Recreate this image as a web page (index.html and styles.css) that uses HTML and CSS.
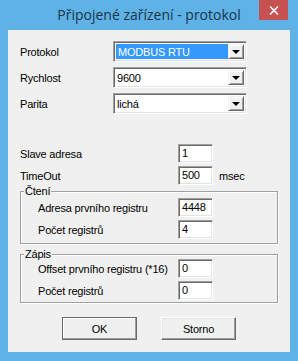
FILE: index.html
```html
<!DOCTYPE html>
<html lang="cs">
<head>
    <meta charset="UTF-8">
    <title>Připojené zařízení - protokol</title>
    <link rel="stylesheet" href="styles.css">
</head>
<body>
    <div class="window">
        <div class="titlebar">
            <span></span>
            <span class="title">Připojené zařízení - protokol</span>
            <span class="close">
                <svg width="10" height="9" viewBox="0 0 10 9">
                    <path d="M1 0.5 L9 8.5 M9 0.5 L1 8.5" stroke="#fff" stroke-width="1.6" fill="none"/>
                </svg>
            </span>
        </div>

        <div class="client">
            <div class="combos">
                <div class="row">
                    <span class="lbl lbl-combo">Protokol</span>
                    <div class="combo">
                        <span class="combo-text"><span class="sel">MODBUS RTU</span></span>
                        <span class="combo-btn"><span class="arrow"></span></span>
                    </div>
                </div>
                <div class="row">
                    <span class="lbl lbl-combo">Rychlost</span>
                    <div class="combo">
                        <span class="combo-text">9600</span>
                        <span class="combo-btn"><span class="arrow"></span></span>
                    </div>
                </div>
                <div class="row">
                    <span class="lbl lbl-combo">Parita</span>
                    <div class="combo">
                        <span class="combo-text">lichá</span>
                        <span class="combo-btn"><span class="arrow"></span></span>
                    </div>
                </div>
            </div>

            <div class="fields">
                <div class="row">
                    <span class="lbl lbl-wide">Slave adresa</span>
                    <span class="edit">1</span>
                </div>
                <div class="row">
                    <span class="lbl lbl-wide">TimeOut</span>
                    <span class="edit">500</span>
                    <span class="unit">msec</span>
                </div>
            </div>

            <div class="group group-read">
                <div class="group-title">Čtení</div>
                <div class="fields">
                    <div class="row">
                        <span class="lbl lbl-group">Adresa prvního registru</span>
                        <span class="edit">4448</span>
                    </div>
                    <div class="row">
                        <span class="lbl lbl-group">Počet registrů</span>
                        <span class="edit">4</span>
                    </div>
                </div>
            </div>

            <div class="group group-write">
                <div class="group-title">Zápis</div>
                <div class="fields">
                    <div class="row">
                        <span class="lbl lbl-group">Offset prvního registru (*16)</span>
                        <span class="edit">0</span>
                    </div>
                    <div class="row">
                        <span class="lbl lbl-group">Počet registrů</span>
                        <span class="edit">0</span>
                    </div>
                </div>
            </div>

            <div class="buttons">
                <span class="btn btn-default">OK</span>
                <span class="btn">Storno</span>
            </div>
        </div>
    </div>
</body>
</html>
```

FILE: styles.css
```css
body {
    margin: 0;
    padding: 0;
    font-family: "Liberation Sans", Arial, sans-serif;
    font-size: 11px;
    letter-spacing: -0.2px;
    color: #000;
}

.window {
    width: 298px;
    height: 361px;
    box-sizing: border-box;
    background: #5fb2e6;
    padding: 0 8px 9px 8px;
    display: flex;
    flex-direction: column;
}

/* title bar */
.titlebar {
    height: 30px;
    margin: 0 -8px;
    display: grid;
    grid-template-columns: 1fr auto 1fr;
    align-items: start;
}

.title {
    font-family: "Open Sans", "Noto Sans", sans-serif;
    font-size: 14px;
    letter-spacing: 0;
    line-height: 30px;
    color: #1c3549;
    white-space: nowrap;
}

.close {
    justify-self: end;
    margin-right: 10px;
    width: 29px;
    height: 20px;
    background: #c75050;
    display: flex;
    align-items: center;
    justify-content: center;
}

/* client area */
.client {
    flex: 1;
    background: #f0f0f0;
    padding: 11px 12px 0 12px;
}

.row {
    display: flex;
    align-items: center;
}

.lbl {
    flex-shrink: 0;
    white-space: nowrap;
}

.lbl-combo {
    width: 93px;
}

.lbl-wide {
    width: 158px;
}

.lbl-group {
    width: 140px;
}

.combos {
    display: flex;
    flex-direction: column;
    gap: 5px;
}

/* sunken 3d frame used by combo and edit */
.combo, .edit {
    box-sizing: border-box;
    border-style: solid;
    border-width: 1px;
    border-color: #a0a0a0 #fff #fff #a0a0a0;
    box-shadow: inset 1px 1px 0 #696969, inset -1px -1px 0 #e3e3e3;
    background: #fff;
}

.combo {
    width: 134px;
    height: 21px;
    display: flex;
    padding: 2px 2px 2px 2px;
}

.combo-text {
    flex: 1;
    display: flex;
    align-items: center;
    padding-left: 1px;
}

.sel {
    flex: 1;
    align-self: stretch;
    display: flex;
    align-items: center;
    margin-left: -1px;
    padding-left: 2px;
    background: #3399ff;
    color: #fff;
}

.combo-btn {
    width: 16px;
    box-sizing: border-box;
    background: #f0f0f0;
    border-style: solid;
    border-width: 1px;
    border-color: #f0f0f0 #696969 #696969 #f0f0f0;
    box-shadow: inset 1px 1px 0 #fff, inset -1px -1px 0 #a0a0a0;
    display: flex;
    align-items: center;
    justify-content: center;
}

.arrow {
    width: 0;
    height: 0;
    border-left: 4px solid transparent;
    border-right: 4px solid transparent;
    border-top: 4px solid #000;
    margin-top: 1px;
}

.fields {
    display: flex;
    flex-direction: column;
    gap: 3px;
}

.client > .fields {
    margin-top: 30px;
}

.edit {
    width: 35px;
    height: 19px;
    padding: 0 0 0 3px;
    line-height: 17px;
}

.unit {
    margin-left: 6px;
}

/* group boxes */
.group {
    border: 1px solid #a0a0a0;
    box-shadow: inset 1px 1px 0 #fff, 1px 1px 0 #fff;
    padding: 0 0 4px 17px;
}

.group-read {
    margin-top: 6px;
}

.group-write {
    margin-top: 10px;
    padding-bottom: 2px;
}

.group-title {
    width: fit-content;
    height: 13px;
    line-height: 13px;
    margin: -7px 0 0 -14px;
    padding: 0 1px;
    background: #f0f0f0;
}

.group-read .group-title {
    margin-bottom: 0;
}

.group-write .group-title {
    margin-bottom: -2px;
}

/* buttons */
.buttons {
    margin-top: 14px;
    display: flex;
    justify-content: center;
    gap: 24px;
}

.btn {
    box-sizing: border-box;
    width: 75px;
    height: 23px;
    background: #f0f0f0;
    border-style: solid;
    border-width: 1px;
    border-color: #fff #696969 #696969 #fff;
    box-shadow: inset -1px -1px 0 #a0a0a0, inset 1px 1px 0 #e3e3e3;
    display: flex;
    align-items: center;
    justify-content: center;
}

.btn-default {
    border-color: #696969;
    box-shadow: inset -1px -1px 0 #a0a0a0, inset 1px 1px 0 #fff;
}
```
